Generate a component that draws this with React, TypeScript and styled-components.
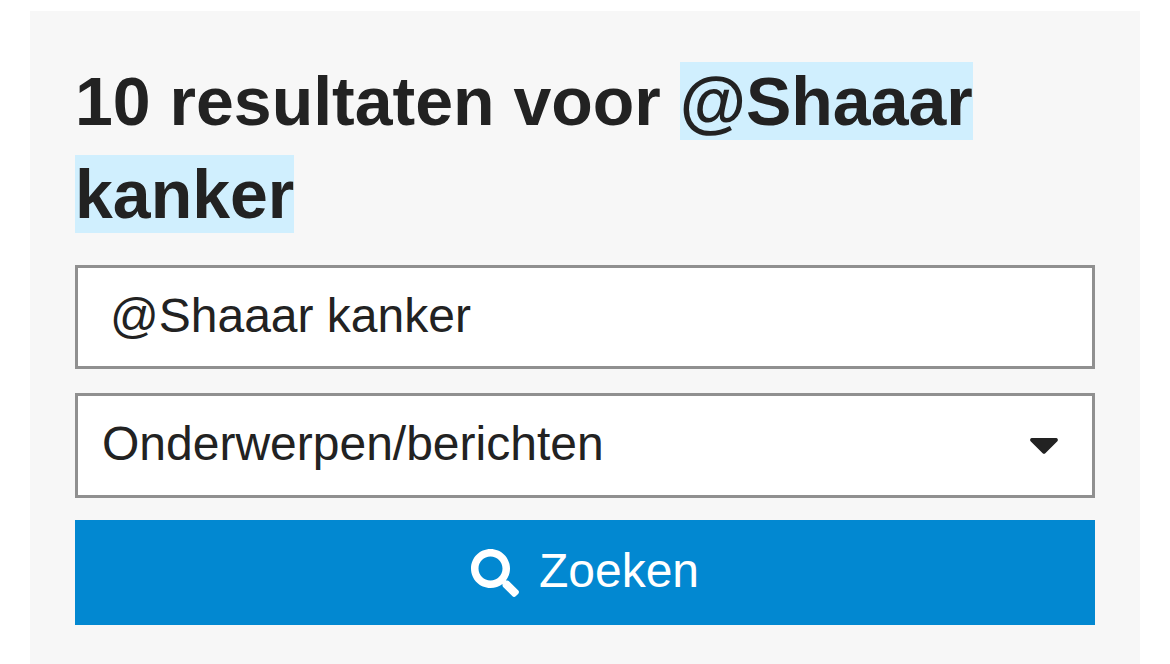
import React, { useState } from "react";
import styled, { createGlobalStyle } from "styled-components";
import { FaCaretDown, FaSearch } from "react-icons/fa";

const GlobalStyle = createGlobalStyle`
  *, *::before, *::after { box-sizing: border-box; }
  body {
    margin: 0;
    background: #ffffff;
    color: #222222;
    font-family: "Liberation Sans", Arial, sans-serif;
  }
`;

const Page = styled.main`
  padding: 11px 30px 0;
`;

const SearchPanel = styled.section`
  background: #f7f7f7;
  padding: 44px 45px 39px;
`;

const Title = styled.h1`
  margin: 0 0 24px;
  font-size: 68px;
  line-height: 93px;
  font-weight: 700;
`;

const Highlight = styled.mark`
  padding: 1px 0;
  background: #d0effe;
  color: inherit;
  -webkit-box-decoration-break: clone;
  box-decoration-break: clone;
`;

const SearchForm = styled.form`
  display: flex;
  flex-direction: column;
`;

const controlStyle = `
  display: block;
  width: 100%;
  border: 3px solid #909090;
  border-radius: 0;
  background: #ffffff;
  color: #222222;
  font-family: inherit;
  font-size: 48px;
`;

const TextField = styled.input`
  ${controlStyle}
  height: 104px;
  margin: 0 0 24px;
  padding: 0 32px 4px;
`;

const SelectWrap = styled.div`
  display: grid;
  align-items: center;
  margin-bottom: 22px;

  > * { grid-area: 1 / 1; }
  > svg {
    justify-self: end;
    margin-right: 27px;
    margin-bottom: 4px;
    pointer-events: none;
  }
`;

const Select = styled.select`
  ${controlStyle}
  height: 105px;
  margin: 0;
  appearance: none;
  padding: 0 80px 4px 24px;
`;

const SubmitButton = styled.button`
  display: flex;
  align-items: center;
  justify-content: center;
  gap: 20px;
  height: 105px;
  padding: 0;
  border: 0;
  background: #0288d1;
  color: #ffffff;
  font-family: inherit;
  font-size: 48px;
`;

const ButtonLabel = styled.span`
  padding-bottom: 4px;
`;

export default function App() {
  const [query, setQuery] = useState("@Shaaar kanker");

  return (
    <Page>
      <GlobalStyle />
      <SearchPanel>
        <Title>
          10 resultaten voor <Highlight>@Shaaar kanker</Highlight>
        </Title>
        <SearchForm onSubmit={(event) => event.preventDefault()}>
          <TextField
            type="text"
            aria-label="Zoekterm"
            value={query}
            onChange={(event) => setQuery(event.target.value)}
          />
          <SelectWrap>
            <Select aria-label="Zoeken in">
              <option>Onderwerpen/berichten</option>
            </Select>
            <FaCaretDown size={48} aria-hidden />
          </SelectWrap>
          <SubmitButton type="submit">
            <FaSearch size={48} aria-hidden />
            <ButtonLabel>Zoeken</ButtonLabel>
          </SubmitButton>
        </SearchForm>
      </SearchPanel>
    </Page>
  );
}
